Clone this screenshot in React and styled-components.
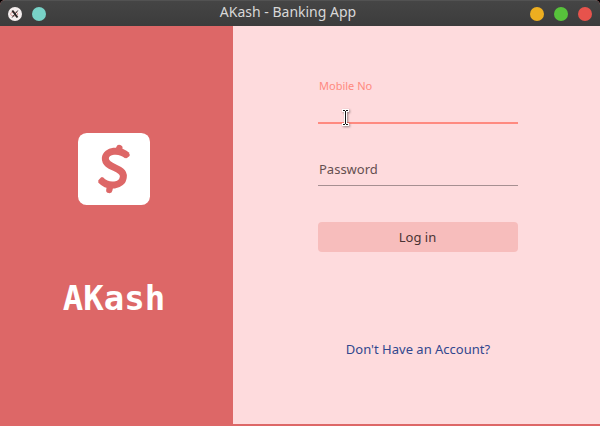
import React from "react";
import styled, { createGlobalStyle } from "styled-components";

const GlobalStyle = createGlobalStyle`
  body { margin: 0; background: #000; overflow: hidden; font-family: "Noto Sans", sans-serif; }
  * { box-sizing: border-box; }
`;

const Window = styled.div`
  width: 600px;
  height: 426px;
  display: flex;
  flex-direction: column;
  border-radius: 5px 5px 0 0;
  overflow: hidden;
  background: #dd6767;
`;

const TitleBar = styled.header`
  height: 26px;
  flex: none;
  display: grid;
  grid-template-columns: 1fr auto 1fr;
  align-items: center;
  padding: 1px 8px 0;
  background: linear-gradient(#454545, #3c3c3c);
  border-top: 1px solid #525252;
`;

const Group = styled.div`
  display: flex;
  gap: 10px;
  justify-content: ${(p) => (p.$end ? "flex-end" : "flex-start")};
`;

const Dot = styled.span`
  width: 14px;
  height: 14px;
  border-radius: 50%;
  background: ${(p) => p.$color};
`;

const AppIcon = styled.svg`
  width: 14px;
  height: 14px;
  display: block;
`;

const Title = styled.h1`
  margin: 0 24px 0 0;
  padding-bottom: 4px;
  font-size: 14px;
  line-height: 20px;
  font-weight: 400;
  color: #d8d8d8;
  white-space: nowrap;
`;

const Content = styled.main`
  display: flex;
  height: 398px;
`;

const Brand = styled.section`
  width: 233px;
  flex: none;
  padding: 107px 5px 0 0;
  display: flex;
  flex-direction: column;
  align-items: center;
`;

const Logo = styled.svg`
  width: 72px;
  height: 72px;
  display: block;
`;

const BrandName = styled.h2`
  margin: 73px 0 0;
  font: 700 34px/40px "DejaVu Sans Mono", monospace;
  color: #fff;
`;

const FormPanel = styled.form`
  flex: 1;
  padding: 52px 0 0 85px;
  background: #fedbdd;
`;

const Field = styled.label`
  position: relative;
  display: block;
  width: 200px;
  height: ${(p) => (p.$active ? 46 : 62)}px;
  padding: ${(p) => (p.$active ? "0 1px" : "36px 1px 0")};
  border-bottom: ${(p) => (p.$active ? "2px solid #ff8a80" : "1px solid #a68f91")};
  font-size: ${(p) => (p.$active ? 11 : 13)}px;
  line-height: ${(p) => (p.$active ? 16 : 18)}px;
  color: ${(p) => (p.$active ? "#ff8a80" : "#654f50")};
`;

const TextCursor = styled.svg`
  position: absolute;
  left: 22px;
  top: 29px;
  width: 12px;
  height: 20px;
  filter: drop-shadow(1px 1px 1px #0006);
`;

const LoginButton = styled.button`
  display: block;
  width: 200px;
  height: 30px;
  margin-top: 36px;
  padding: 0 1px 0 0;
  border: 0;
  border-radius: 4px;
  background: #f7bdbc;
  color: #493334;
  font: 13px/18px "Noto Sans", sans-serif;
`;

const SignUp = styled.a`
  display: block;
  width: 200px;
  margin-top: 88px;
  text-align: center;
  font-size: 13px;
  line-height: 18px;
  color: #31478e;
`;

export default function App() {
  return (
    <>
      <GlobalStyle />
      <Window>
        <TitleBar>
          <Group>
            <AppIcon viewBox="0 0 14 14">
              <circle cx="7" cy="7" r="7" fill="#f4eeee" />
              <ellipse cx="6.2" cy="7" rx="3.7" ry="2" fill="none" stroke="#d79b98" />
              <path d="M4.3 3.5 9.5 10.5" stroke="#282424" strokeWidth="2" />
              <path d="M9.8 3.5 4.2 10.5" stroke="#282424" />
            </AppIcon>
            <Dot $color="#78d2c7" />
          </Group>
          <Title>AKash - Banking App</Title>
          <Group $end>
            <Dot $color="#edae20" />
            <Dot $color="#57c23b" />
            <Dot $color="#e7534c" />
          </Group>
        </TitleBar>
        <Content>
          <Brand>
            <Logo viewBox="42 39 216 216">
              <rect x="42" y="39" width="216" height="216" rx="26" fill="#fff" />
              <g fill="none" stroke="#dd6767" strokeWidth="21">
                <path
                  d="M190 107C166 86 126 91 124 114C122 145 181 141 178 170C176 200 132 203 110 180"
                  strokeLinejoin="round"
                />
                <path d="M166 84 163 93M136 210 138 200" strokeLinecap="round" strokeWidth="19" />
                <path
                  d="M184 101 193 105 187 110M114 176 107 183 114 188"
                  strokeWidth="9"
                  strokeLinecap="round"
                  strokeLinejoin="round"
                />
              </g>
            </Logo>
            <BrandName>AKash</BrandName>
          </Brand>
          <FormPanel>
            <Field $active>
              Mobile No
              <TextCursor viewBox="0 0 12 20">
                <path d="M2 3.5H9M5.5 3V17M2 17.5H9" fill="none" stroke="#fff" strokeWidth="3" />
                <path d="M3 3.5H5M6 3.5H8M5.5 4V17M3 17.5H5M6 17.5H8" fill="none" stroke="#151515" />
              </TextCursor>
            </Field>
            <Field>Password</Field>
            <LoginButton type="button">Log in</LoginButton>
            <SignUp>Don't Have an Account?</SignUp>
          </FormPanel>
        </Content>
      </Window>
    </>
  );
}
